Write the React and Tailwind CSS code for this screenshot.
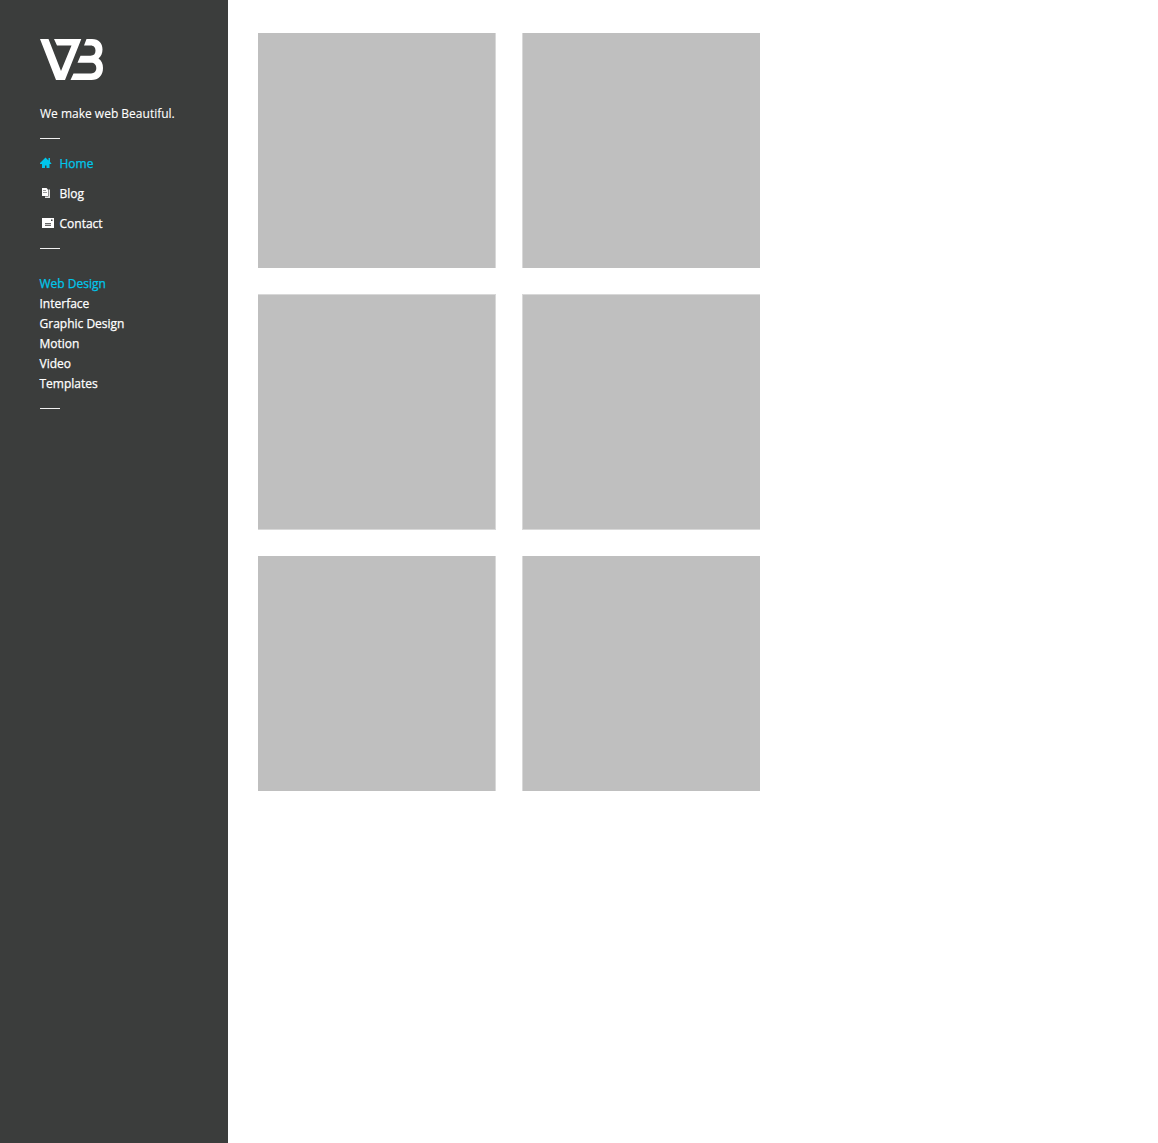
const pages = [
  { name: 'Home', icon: HomeIcon, active: true },
  { name: 'Blog', icon: BlogIcon },
  { name: 'Contact', icon: ContactIcon },
];

const categories = ['Web Design', 'Interface', 'Graphic Design', 'Motion', 'Video', 'Templates'];

const tiles = [
  'border-r',
  'border-l',
  'border-r border-y',
  'border-l border-y',
  'border-r',
  'border-l',
];

function Logo() {
  return (
    <svg className="block h-[41px] w-16" viewBox="0 0 64 41" fill="#fff" aria-label="VB">
      <path d="M0 0h8.5L21 32 31.5 6.500H17L14 0h27.300L25 41h-9z" />
      <path d="M46.500 0H52c7 0 10.500 4.500 10.500 10.500 0 4-1.500 7-4 9 3 2 4.500 5.500 4.500 9.500C63 36.500 58.500 41 51.500 41H30.500l3-6.600H51c3.500 0 5.300-2.200 5.300-5.400 0-3.300-2-5.300-5.300-5.300H37.500l3-7H50.500c3.300 0 5-1.700 5-4.900S54 6.500 50.500 6.500H44z" />
    </svg>
  );
}

function HomeIcon() {
  return (
    <svg className="block h-3 w-[14px]" viewBox="0 0 14 12" fill="currentColor">
      <path d="M5.500.6 8.500 3.600V1H10v4L11.300 6.300V7H9.500v4H6.500V8.500h-1.500V11H2V7H0V6z" />
    </svg>
  );
}

function BlogIcon() {
  return (
    <svg className="block h-3 w-[14px]" viewBox="0 0 14 12">
      <path d="M2 1h4.500L8 2.500V9H2z" fill="#fff" />
      <path d="M3 3.500h3M3 5.500h4" stroke="#999" strokeWidth="1" />
      <path d="M8.500 2.500H10V11H5V9.500h3.500z" fill="#e4e4e4" />
    </svg>
  );
}

function ContactIcon() {
  return (
    <svg className="block h-3 w-[14px]" viewBox="0 0 14 12">
      <path d="M2 1h12v10H2z" fill="#fff" />
      <path d="M11 2.500h1.500V4H11z" fill="#3b3d3c" />
      <path d="M5 6h6v1H5z" fill="#666" />
      <path d="M5 8h6v1H5z" fill="#666" />
      <path d="M5 7h6v1H5z" fill="#ccc" />
    </svg>
  );
}

function Divider() {
  return <div className="h-px w-5 bg-[#f0f0f0]" />;
}

export default function App() {
  return (
    <div className="flex h-[1143px] overflow-hidden bg-white font-['Open_Sans',sans-serif] text-xs text-white">
      <aside className="w-[228px] shrink-0 bg-[#3b3d3c] pt-[39px] pl-10">
        <Logo />
        <p className="mt-6 mb-[14px] leading-5 whitespace-nowrap text-white [-webkit-text-stroke:0.1px_currentColor]">We make web Beautiful.</p>
        <Divider />
        <nav className="mt-[10px] mb-[9px]">
          {pages.map(({ name, icon: Icon, active }) => (
            <a key={name} className={`flex h-[30px] items-center [-webkit-text-stroke:0.25px_currentColor] ${active ? 'text-[#00c6eb]' : 'text-white'}`}>
              <span className="mb-[2px]"><Icon /></span>
              <span className="ml-[5.500px]">{name}</span>
            </a>
          ))}
        </nav>
        <Divider />
        <ul className="mt-[25px] mb-[14px] -ml-[0.5px] leading-5 [-webkit-text-stroke:0.25px_currentColor]">
          {categories.map((name) => (
            <li key={name} className={name === 'Web Design' ? 'text-[#00c6eb]' : 'text-white'}>{name}</li>
          ))}
        </ul>
        <Divider />
      </aside>
      <main className="grid h-fit grid-cols-[238px_238px] grid-rows-[235px_236px_235px] gap-x-[26px] gap-y-[26px] pt-[33px] pl-[30px]">
        {tiles.map((edges, i) => (
          <div key={i} className={`border-[#d8d8d8] bg-[#bfbfbf] ${edges}`} />
        ))}
      </main>
    </div>
  );
}
